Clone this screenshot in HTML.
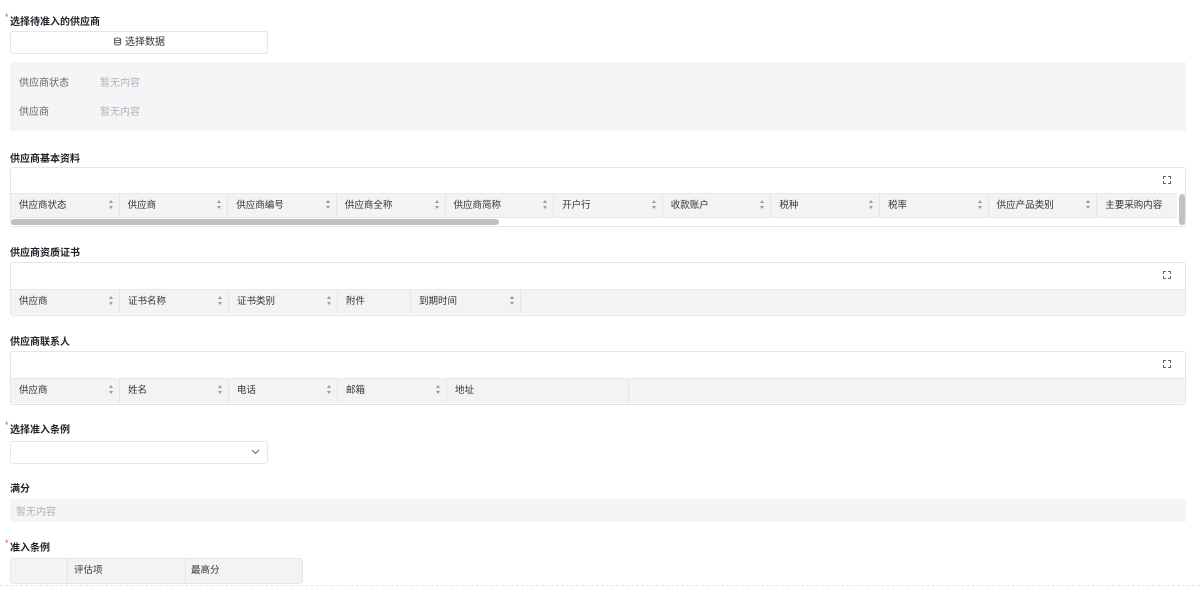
<!DOCTYPE html>
<html><head><meta charset="utf-8"><style>
*{box-sizing:border-box;margin:0;padding:0}
body{width:1200px;height:589px;background:#fff;font-family:"Liberation Sans","Noto Sans CJK SC",sans-serif;font-size:10px;color:#333;position:relative;overflow:hidden}
.a{position:absolute}
.lbl{position:absolute;left:10px;font-weight:bold;font-size:10px;color:#1f2329}
.lbl i{color:#e5484d;font-style:normal;font-weight:normal;position:absolute;left:-5px;top:-1px;font-size:9px}
.box{position:absolute;border:1px solid #e3e5e8;border-radius:3px;background:#fff}
.gray{position:absolute;background:#f4f5f7}
.muted{color:#b0b4ba}
.hdr{position:absolute;height:25px;background:#f2f3f5;border-top:1px solid #e6e8eb;border-bottom:1px solid #e6e8eb;display:flex}
.hdr div{height:100%;border-right:1px solid #e3e5e8;padding-left:8px;line-height:24px;color:#333;position:relative;font-size:9.5px}
.hdr div.s::after{content:"";position:absolute;right:6px;top:4px;border:2.5px solid transparent;border-bottom:3px solid #999;}
.hdr div.s::before{content:"";position:absolute;right:6px;top:12px;border:2.5px solid transparent;border-top:3px solid #999;}
.fs{position:absolute;width:8px;height:8px}
</style></head><body>
<div class="lbl" style="top:13px"><i>*</i>选择待准入的供应商</div>
<div class="box" style="left:10px;top:31px;width:258px;height:23px;text-align:center;line-height:21px;font-size:10px">
<svg width="9" height="9" viewBox="0 0 10 10" style="vertical-align:-1px;margin-right:3px"><ellipse cx="5" cy="2.5" rx="3.5" ry="1.5" fill="none" stroke="#555" stroke-width="1"/><path d="M1.5 2.5v5c0 .8 1.6 1.5 3.5 1.5s3.5-.7 3.5-1.5v-5M1.5 5c0 .8 1.6 1.5 3.5 1.5s3.5-.7 3.5-1.5" fill="none" stroke="#555" stroke-width="1"/></svg>选择数据</div>
<div class="gray" style="left:10px;top:62px;width:1176px;height:69px"></div>
<div class="a" style="left:19px;top:74px;color:#666">供应商状态</div>
<div class="a muted" style="left:100px;top:74px">暂无内容</div>
<div class="a" style="left:19px;top:103px;color:#666">供应商</div>
<div class="a muted" style="left:100px;top:103px">暂无内容</div>

<div class="lbl" style="top:150px">供应商基本资料</div>
<div class="box" style="left:10px;top:167px;width:1176px;height:60px;overflow:hidden">
<svg class="fs" style="left:1152px;top:8px" viewBox="0 0 8 8" fill="none" stroke="#666" stroke-width="1"><path d="M0.5 3V.5H3M5 .5h2.5V3M7.5 5v2.5H5M3 7.5H.5V5"/></svg>
<div class="hdr" style="left:0;top:25px;width:1166px">
<div class="s" style="width:109px">供应商状态</div><div class="s" style="width:109px">供应商</div><div class="s" style="width:109px">供应商编号</div><div class="s" style="width:109px">供应商全称</div><div class="s" style="width:109px">供应商简称</div><div class="s" style="width:109px">开户行</div><div class="s" style="width:109px">收款账户</div><div class="s" style="width:109px">税种</div><div class="s" style="width:109px">税率</div><div class="s" style="width:109px">供应产品类别</div><div style="width:80px;border:none">主要采购内容</div>
</div>
<div class="a" style="left:0;top:51px;width:488px;height:6px;background:#bfc1c4;border-radius:3px"></div>
<div class="a" style="left:1168px;top:26px;width:6px;height:31px;background:#bfc1c4;border-radius:3px"></div>
</div>

<div class="lbl" style="top:244px">供应商资质证书</div>
<div class="box" style="left:10px;top:262px;width:1176px;height:54px;overflow:hidden">
<svg class="fs" style="left:1152px;top:8px" viewBox="0 0 8 8" fill="none" stroke="#666" stroke-width="1"><path d="M0.5 3V.5H3M5 .5h2.5V3M7.5 5v2.5H5M3 7.5H.5V5"/></svg>
<div class="hdr" style="left:0;top:26px;width:1176px;border-bottom:none">
<div class="s" style="width:109px">供应商</div><div class="s" style="width:109px">证书名称</div><div class="s" style="width:109px">证书类别</div><div style="width:73px">附件</div><div class="s" style="width:110px">到期时间</div>
</div></div>

<div class="lbl" style="top:333px">供应商联系人</div>
<div class="box" style="left:10px;top:351px;width:1176px;height:54px;overflow:hidden">
<svg class="fs" style="left:1152px;top:8px" viewBox="0 0 8 8" fill="none" stroke="#666" stroke-width="1"><path d="M0.5 3V.5H3M5 .5h2.5V3M7.5 5v2.5H5M3 7.5H.5V5"/></svg>
<div class="hdr" style="left:0;top:26px;width:1176px;border-bottom:none">
<div class="s" style="width:109px">供应商</div><div class="s" style="width:109px">姓名</div><div class="s" style="width:109px">电话</div><div class="s" style="width:109px">邮箱</div><div style="width:182px">地址</div>
</div></div>

<div class="lbl" style="top:421px"><i>*</i>选择准入条例</div>
<div class="box" style="left:10px;top:441px;width:258px;height:23px">
<svg class="a" style="left:240px;top:7px" width="9" height="6" viewBox="0 0 9 6"><path d="M1 1l3.5 3.5L8 1" fill="none" stroke="#666" stroke-width="1"/></svg></div>

<div class="lbl" style="top:480px">满分</div>
<div class="gray" style="left:10px;top:499px;width:1176px;height:23px"></div>
<div class="a muted" style="left:16px;top:503px">暂无内容</div>

<div class="lbl" style="top:539px"><i>*</i>准入条例</div>
<div class="hdr" style="left:10px;top:558px;width:293px;height:26px;border:1px solid #e3e5e8;border-radius:3px">
<div style="width:57px"></div><div style="width:118px;padding-left:6px">评估项</div><div style="width:116px;padding-left:5px;border:none">最高分</div>
</div>
<div class="a" style="left:0;top:585px;width:1200px;border-top:1px dashed #e3e5e8"></div>
</body></html>
